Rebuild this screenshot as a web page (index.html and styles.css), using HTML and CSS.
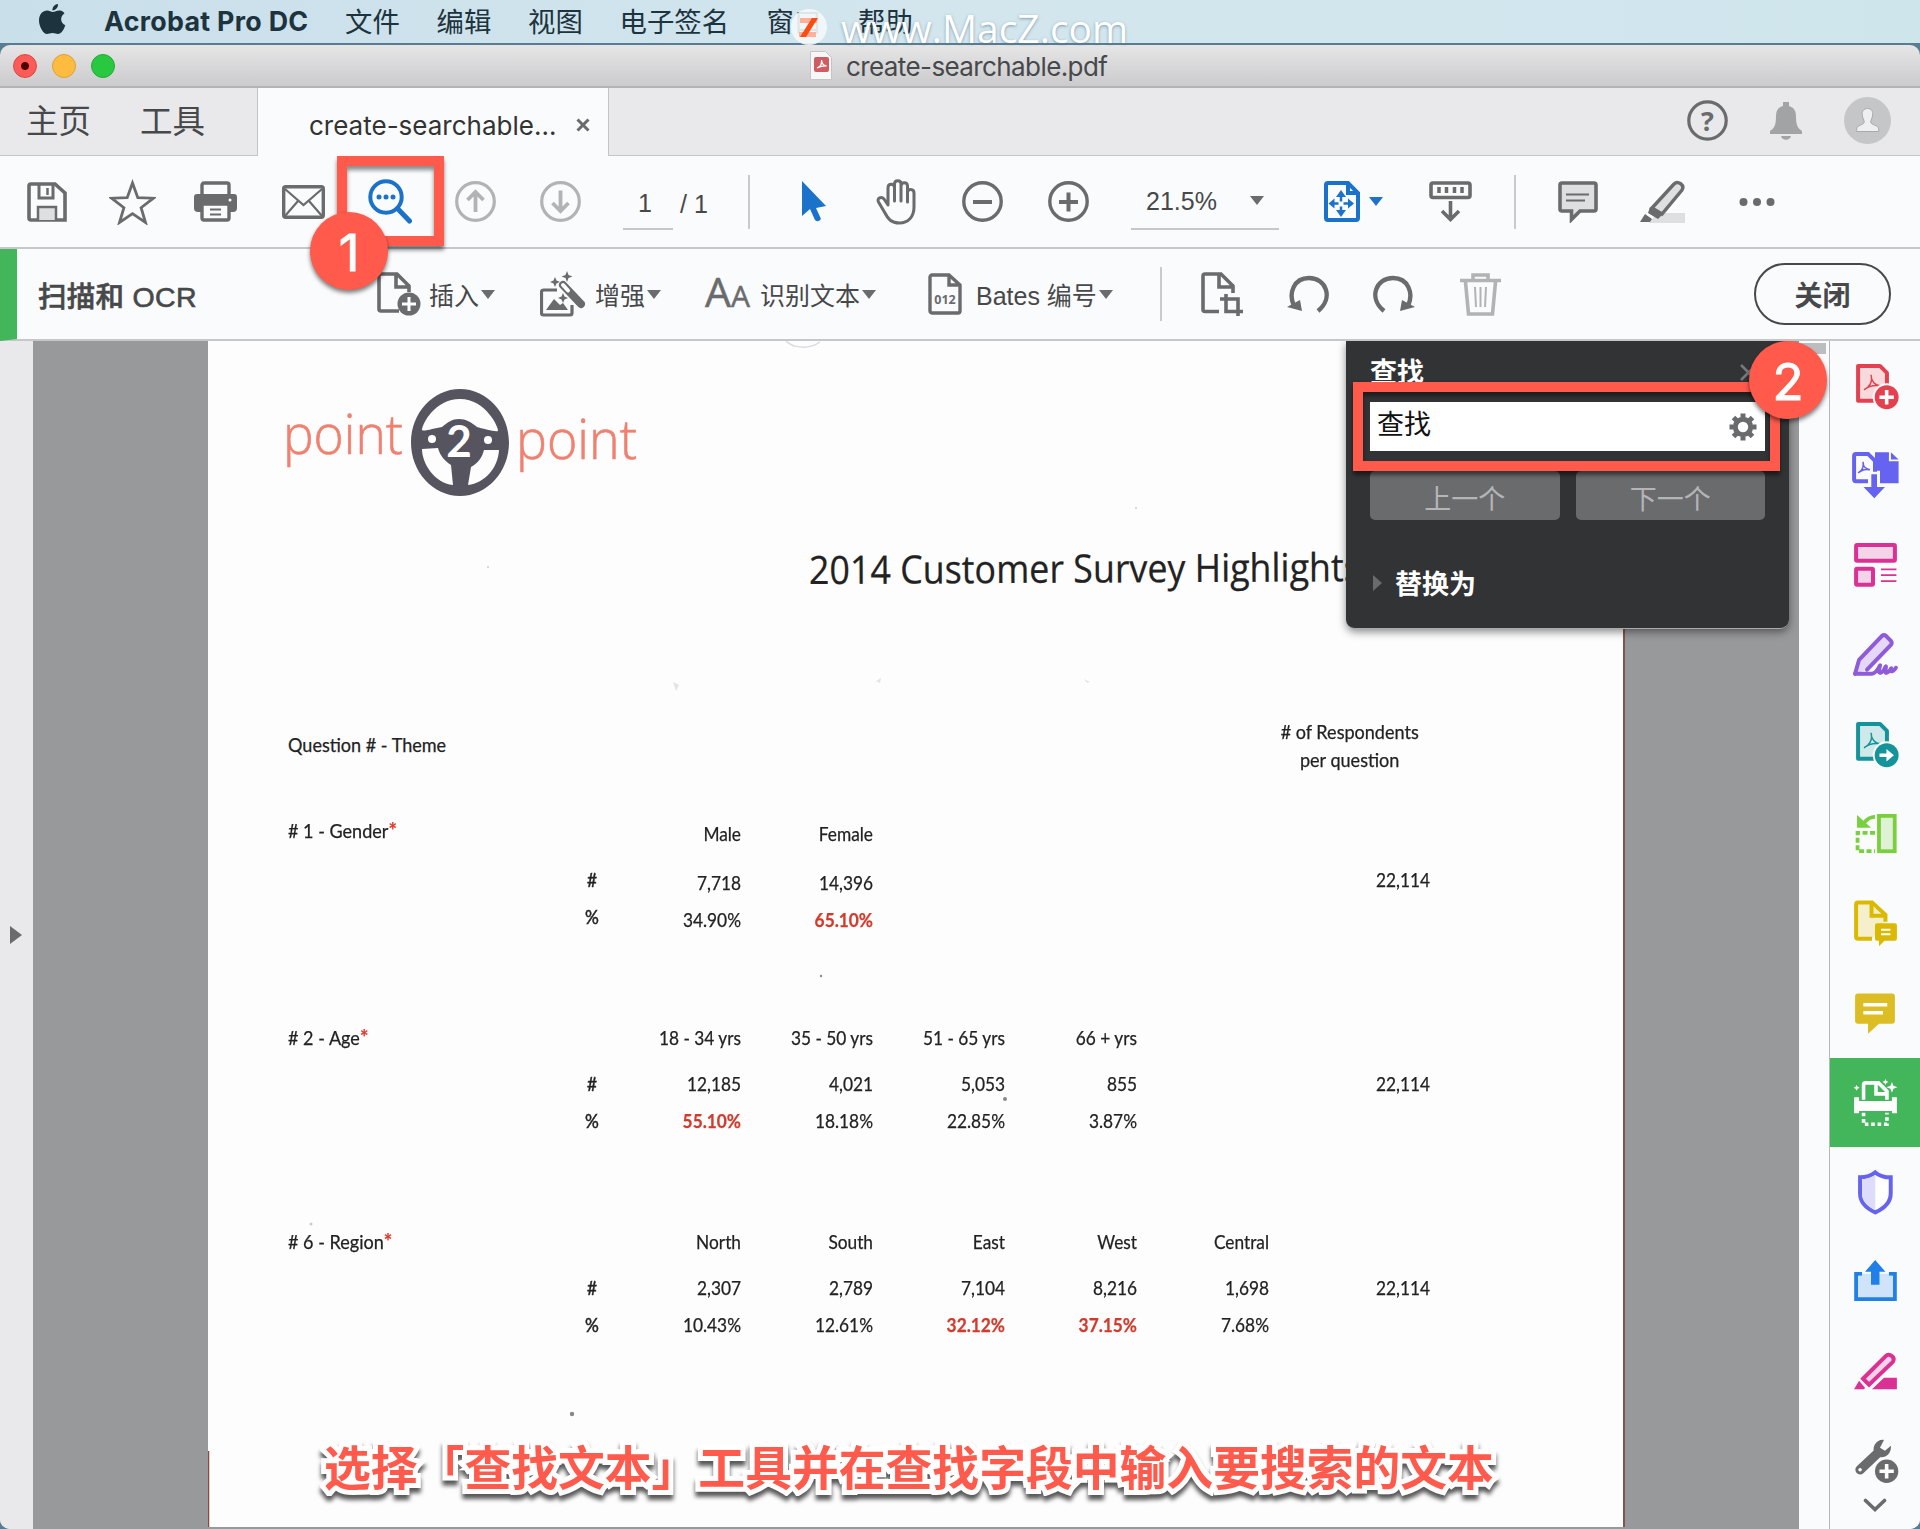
FILE: index.html
```html
<!DOCTYPE html>
<html lang="zh-CN">
<head>
    <meta charset="UTF-8">
    <title>create-searchable.pdf</title>
    <link rel="stylesheet" href="styles.css">
</head>
<body>

<!-- macOS menu bar -->
<nav class="menubar">
    <svg width="65" height="32" viewBox="0 0 65 32"><path fill="#1d333d" d="M14 8c2 0 4-2 7-1.500 2 .3 3.500 1.300 4.500 2.700-5 3.500-4 10 .8 12C25 25.500 22 30 19 30c-2 0-3-1-5.500-1S10 30 8 30C4 30 0 22 0 16.500 0 10 4 6.500 8 6.500c2.500 0 4 1.500 6 1.500zM13.500 6.500C13 3 16 0 19 0c.4 3.500-2.500 6.500-5.500 6.500z"/></svg>
    <b>Acrobat Pro DC</b>
    <span>文件</span>
    <span>编辑</span>
    <span>视图</span>
    <span class="wide">电子签名</span>
    <span>窗口</span>
    <span>帮助</span>
    <div class="watermark">
        <svg width="36" height="36" viewBox="0 0 36 36"><circle cx="18" cy="18" r="18" fill="#f4f8fa" opacity=".9"/><path fill="#ffb09a" d="M9 9h17v5H9zM8 23h17v5H8z"/><path fill="#fb4b14" d="M21 9h6L15 28H9z"/></svg>
        www.MacZ.com
    </div>
</nav>

<div class="titlebar">
    <i class="light red"></i><i class="light yellow"></i><i class="light green"></i>
    <svg class="file" width="22" height="29" viewBox="0 0 22 29"><path d="M.5.500h15l6 6v22H.5z" fill="#f7f7f7" stroke="#c4c4c6"/><rect x="4" y="6" width="15" height="15" rx="2" fill="#cf5c61"/><path d="M7 17c4-1.500 5-5 4.500-8 .3 4 2 5.500 5 6-4-.3-6 .4-9.500 2z" fill="none" stroke="#fff" stroke-width="1.300"/></svg>
    <span>create-searchable.pdf</span>
</div>

<div class="tabs">
    <div class="home"><span>主页</span><span>工具</span></div>
    <div class="tab"><span>create-searchable…</span>
        <svg width="14" height="14" viewBox="0 0 14 14"><path d="M1.500 1.500l11 11M12.500 1.500l-11 11" stroke="#6a6b6d" stroke-width="3"/></svg>
    </div>
    <div class="account">
        <svg width="41" height="41" viewBox="0 0 41 41"><circle cx="20.500" cy="20.500" r="18.700" fill="none" stroke="#6a6b6d" stroke-width="3.200"/><text x="20.500" y="30.500" text-anchor="middle" class="qmark">?</text></svg>
        <svg width="32" height="38" viewBox="0 0 32 38" fill="#a2a3a5"><path d="M13 0h6v4c5 1.500 7 5 7 10 0 9 1.500 12 6 15v3H0v-3c4.500-3 6-6 6-15 0-5 2-8.500 7-10zM11 34h10c-1 5-9 5-10 0z"/></svg>
        <svg width="47" height="47" viewBox="0 0 47 47"><circle cx="23.500" cy="23.500" r="23.500" fill="#c5c6c7"/><path fill="#eeeff0" stroke="#a9aaac" d="M23.500 11.500c4 0 5.500 3 5.200 6.500-.3 3-2 5-2 7 0 3 8 3 8 7v2.500h-22V32c0-4 7.500-4 7.500-7 0-2-1.700-4-2-7-.3-3.500 1.300-6.500 5.300-6.500z"/></svg>
    </div>
</div>

<div class="toolbar">
    <svg width="40" height="40" viewBox="0 0 40 40" fill="none" stroke="#6a6b6d" stroke-width="3.600"><path d="M4 2h24l10 9v27H4a2 2 0 0 1-2-2V4a2 2 0 0 1 2-2z"/><path d="M12 2v14h14V2" stroke-width="3"/><path d="M20.500 6v7" stroke-width="2.500"/><path d="M11 38V25h18v13" fill="#dedfe1" stroke-width="2.500"/></svg>
    <svg width="47" height="46" viewBox="0 0 47 46"><path d="M23.500 4l5.300 14.700 15.700.5-12.400 9.500 4.400 14.800-13-8.800-13 8.800 4.400-14.800L2.500 19.200l15.700-.5z" fill="none" stroke="#6a6b6d" stroke-width="2.800"/></svg>
    <svg width="43" height="41" viewBox="0 0 43 41"><path d="M3 13h37a3 3 0 0 1 3 3v11a4 4 0 0 1-4 4H4a4 4 0 0 1-4-4V16a3 3 0 0 1 3-3z" fill="#6a6b6d"/><path d="M8 13V4a2 2 0 0 1 2-2h23a2 2 0 0 1 2 2v9" fill="none" stroke="#6a6b6d" stroke-width="3.400"/><path d="M8 23h27v14a2 2 0 0 1-2 2H10a2 2 0 0 1-2-2z" fill="#fafbfc" stroke="#6a6b6d" stroke-width="3.400"/><path d="M16 28.500h11M16 33.500h11" stroke="#6a6b6d" stroke-width="2"/><circle cx="36" cy="19" r="1.500" fill="#fff"/></svg>
    <svg width="43" height="34" viewBox="0 0 43 34" fill="none" stroke="#6a6b6d"><rect x="1.700" y="1.700" width="39.600" height="30.600" rx="2" stroke-width="3.400"/><path d="M3 4l18.500 16L40 4M3 31l13-15M40 31L27 16" stroke-width="2.200"/></svg>
    <svg width="44" height="45" viewBox="0 0 44 45"><circle cx="18" cy="18" r="15.700" fill="none" stroke="#1b72ca" stroke-width="4"/><path d="M29.500 29.500L41.500 42" stroke="#1b72ca" stroke-width="5" stroke-linecap="round"/><g fill="#1b72ca"><circle cx="11" cy="18" r="2.500"/><circle cx="18" cy="18" r="2.500"/><circle cx="25" cy="18" r="2.500"/></g></svg>
    <svg width="41" height="41" viewBox="0 0 41 41" fill="none" stroke="#b2b3b5" stroke-width="3.200"><circle cx="20.500" cy="20.500" r="18.800"/><path d="M20.500 31V11M12.500 19l8-8 8 8" stroke-width="3.800"/></svg>
    <svg width="41" height="41" viewBox="0 0 41 41" fill="none" stroke="#b2b3b5" stroke-width="3.200"><circle cx="20.500" cy="20.500" r="18.800"/><path d="M20.500 9.500v20M12.500 22l8 8 8-8" stroke-width="3.800"/></svg>
    <div class="field page-no">1</div>
    <span class="page-total">/ 1</span>
    <i class="sep"></i>
    <svg width="26" height="41" viewBox="0 0 26 41"><path d="M1 0l24 25-10 2 5 11q-3 4-6 1l-5-11-8 7z" fill="#1b72ca"/></svg>
    <svg width="44" height="46" viewBox="0 0 44 46" fill="none" stroke="#6a6b6d" stroke-width="3" stroke-linecap="round" stroke-linejoin="round"><path d="M12 26V9c0-5 6.500-5 6.500 0v13V5c0-4.500 6.500-4.500 6.500 0v17V7c0-4.500 6.500-4.500 6.500 0v16V14c0-5 6.500-4.500 6.500 0v14c0 10-6 16-14.500 16C15 44 12 40 9 34L2.500 23c-2-4 3-6 5.500-3z"/></svg>
    <svg width="41" height="41" viewBox="0 0 41 41" fill="none" stroke="#6a6b6d" stroke-width="3.400"><circle cx="20.500" cy="20.500" r="18.700"/><path d="M11 21h19" stroke-width="4"/></svg>
    <svg width="41" height="41" viewBox="0 0 41 41" fill="none" stroke="#6a6b6d" stroke-width="3.400"><circle cx="20.500" cy="20.500" r="18.700"/><path d="M11 21h19M20.500 11.500v19" stroke-width="4"/></svg>
    <div class="field zoom">21.5%<i class="caret"></i></div>
    <svg width="36" height="41" viewBox="0 0 36 41"><path d="M4 2h20l10 10v25a2 2 0 0 1-2 2H4a2 2 0 0 1-2-2V4a2 2 0 0 1 2-2zM24 2v10h10" fill="none" stroke="#1b72ca" stroke-width="4"/><path d="M17 15v16M9 22.500h16" stroke="#1b72ca" stroke-width="2.500" stroke-dasharray="5.500 5"/><path d="M17 9l5 7H12zM17 36l5-7H12zM4.500 22.500l6-5v10zM30 22.500l-6-5v10z" fill="#1b72ca"/></svg>
    <i class="caret blue"></i>
    <svg width="43" height="41" viewBox="0 0 43 41" fill="none" stroke="#6a6b6d"><rect x="2" y="2" width="39" height="14.500" rx="2" stroke-width="3.600"/><path d="M10 6v6M17.500 6v6M25.500 6v6M33 6v6" stroke-width="3.500"/><path d="M21.500 20v18M13 30l8.500 8.500L30 30" stroke-width="3.600"/></svg>
    <i class="sep"></i>
    <svg width="40" height="42" viewBox="0 0 40 42"><path d="M4 2h32a2 2 0 0 1 2 2v24a2 2 0 0 1-2 2H22l-8.500 8.500V30H4a2 2 0 0 1-2-2V4a2 2 0 0 1 2-2z" fill="#dedfe1" stroke="#6a6b6d" stroke-width="3.600"/><path d="M8 13.500h23M8 19.500h19" stroke="#6a6b6d" stroke-width="2"/></svg>
    <svg width="45" height="44" viewBox="0 0 45 44"><path d="M17 33h28v10H9z" fill="#dedfe1"/><path d="M12 28L34 4c4-4 11 1 8 6L22 34z" fill="#dedfe1" stroke="#6a6b6d" stroke-width="3.400"/><path d="M10 27l12 8-4 4-10-6zM5 34l7 5-2 3H0z" fill="#6a6b6d"/></svg>
    <svg width="36" height="10" viewBox="0 0 36 10" fill="#6a6b6d"><circle cx="4.500" cy="5" r="4"/><circle cx="18" cy="5" r="4"/><circle cx="31.500" cy="5" r="4"/></svg>
</div>

<div class="ocrbar">
    <b>扫描和 OCR</b>
    <svg width="44" height="44" viewBox="0 0 44 44"><path d="M22 39H4a2 2 0 0 1-2-2V4a2 2 0 0 1 2-2h16l12 12v6M19 2v13h13" fill="none" stroke="#6a6b6d" stroke-width="3.600"/><circle cx="32" cy="32" r="11.500" fill="#6a6b6d"/><path d="M25 32h14M32 25v14" stroke="#fff" stroke-width="3"/></svg>
    <span>插入<i class="caret"></i></span>
    <svg width="45" height="46" viewBox="0 0 45 46"><path d="M17 19H3.500a2 2 0 0 0-2 2v21a2 2 0 0 0 2 2H30a2 2 0 0 0 2-2V34" fill="none" stroke="#6a6b6d" stroke-width="3.200"/><path d="M6 39l8-11 6 6 3-2 5 7z" fill="#6a6b6d"/><path d="M23 14L41 33" stroke="#6a6b6d" stroke-width="8" stroke-linecap="round"/><path d="M23 14l5 5.500" stroke="#fff" stroke-width="4" stroke-linecap="round"/><path d="M27 0l1.500 4 4 1.500-4 1.500L27 11l-1.500-4-4-1.500 4-1.500zM15 6l1.500 3.500L20 11l-3.500 1.500L15 16l-1.500-3.500L10 11l3.500-1.500zM23 22l1.500 3.500L28 27l-3.500 1.500L23 32l-1.500-3.500L18 27l3.500-1.500z" fill="#6a6b6d"/></svg>
    <span>增强<i class="caret"></i></span>
    <span class="aa">A<small>A</small></span>
    <span>识别文本<i class="caret"></i></span>
    <svg width="34" height="42" viewBox="0 0 34 42"><path d="M4 2h17l11 10v26a2 2 0 0 1-2 2H4a2 2 0 0 1-2-2V4a2 2 0 0 1 2-2zM21 2v10h11" fill="none" stroke="#6a6b6d" stroke-width="3.400"/><text x="17" y="31" text-anchor="middle" class="num">012</text></svg>
    <span>Bates 编号<i class="caret"></i></span>
    <i class="sep"></i>
    <svg width="42" height="44" viewBox="0 0 42 44" fill="none" stroke="#6a6b6d" stroke-width="3.600"><path d="M18 39.500H4a2 2 0 0 1-2-2V4a2 2 0 0 1 2-2h16l12 12v7M18 2v13h14"/><path d="M25 22v17.500h17M19 27h18v17"/></svg>
    <svg width="42" height="38" viewBox="0 0 42 38"><path d="M7 31C1 18 7 3 22 3c17 0 25 20 9 33" fill="none" stroke="#6a6b6d" stroke-width="4.400"/><path d="M0 32l13-7 2 11z" fill="#6a6b6d"/></svg>
    <svg width="42" height="38" viewBox="0 0 42 38"><path d="M35 31C41 18 35 3 20 3 3 3-5 23 11 36" fill="none" stroke="#6a6b6d" stroke-width="4.400"/><path d="M42 32l-13-7-2 11z" fill="#6a6b6d"/></svg>
    <svg width="41" height="43" viewBox="0 0 41 43" fill="none" stroke="#b2b3b5" stroke-width="3.600"><path d="M0 7.500h41M13 7V2h15v5M5.500 9l3 32h24l3-32"/><path d="M15 14l1 20M20.500 14v20M26 14l-1 20" stroke-width="2"/></svg>
    <button class="close">关闭</button>
</div>

<main class="workspace">
    <div class="nav-strip"><i></i></div>

    <div class="canvas">
        <article class="sheet">
            <!-- letterhead: tilted a touch like the scan -->
            <svg class="logo" width="360" height="120" viewBox="0 0 360 120">
                <g class="point">
                    <text x="-2" y="70" textLength="120" lengthAdjust="spacingAndGlyphs">point</text>
                    <text x="231" y="75" textLength="121" lengthAdjust="spacingAndGlyphs">point</text>
                </g>
                <path fill="#56545f" fill-rule="evenodd" d="M175 5c27 0 49 24 49 53.500S202 112 175 112s-49-24-49-53.500S148 5 175 5zM137 46c2 2 12-2 20-3 6-5 10-8 17-8s12 3 18 8c8 2 17 5 21 4 1-3-12-32-38-32-25 0-38 25-38 31zM137 65c0 14 12 34 31 36l-2-20c-6-4-11-9-13-17zM214 66l-15 0c-2 8-6 13-13 17l-3 18c17-2 30-17 31-35z"/>
                <circle cx="147" cy="55" r="4" fill="#fff"/><circle cx="203" cy="56" r="4" fill="#fff"/>
                <text x="174" y="73" text-anchor="middle" class="two">2</text>
            </svg>
            <h1>2014 Customer Survey Highlights</h1>

            <div class="head-row">
                <span>Question # - Theme</span>
                <span class="resp"># of Respondents<br>per question</span>
            </div>

            <section class="question first">
                <span class="label"># 1 - Gender<em>*</em></span><span></span><span>Male</span><span>Female</span>
                <span class="mark">#</span><span>7,718</span><span>14,396</span><span class="total">22,114</span>
                <span class="mark">%</span><span>34.90%</span><span class="hot">65.10%</span>
            </section>
            <section class="question">
                <span class="label"># 2 - Age<em>*</em></span><span></span><span>18 - 34 yrs</span><span>35 - 50 yrs</span><span>51 - 65 yrs</span><span>66 + yrs</span>
                <span class="mark">#</span><span>12,185</span><span>4,021</span><span>5,053</span><span>855</span><span class="total">22,114</span>
                <span class="mark">%</span><span class="hot">55.10%</span><span>18.18%</span><span>22.85%</span><span>3.87%</span>
            </section>
            <section class="question">
                <span class="label"># 6 - Region<em>*</em></span><span></span><span>North</span><span>South</span><span>East</span><span>West</span><span>Central</span>
                <span class="mark">#</span><span>2,307</span><span>2,789</span><span>7,104</span><span>8,216</span><span>1,698</span><span class="total">22,114</span>
                <span class="mark">%</span><span>10.43%</span><span>12.61%</span><span class="hot">32.12%</span><span class="hot">37.15%</span><span>7.68%</span>
            </section>

            <!-- dust and scanner marks -->
            <svg class="dust" width="1416" height="1186" viewBox="0 0 1416 1186" fill="#c9ccd4">
                <path d="M578 0c8 8 24 8 34 1" fill="none" stroke="#d9dadd" stroke-width="1.500"/>
                <circle cx="928" cy="167" r="1"/><circle cx="280" cy="226" r="1"/><circle cx="797" cy="758" r="2" fill="#888"/><circle cx="613" cy="635" r="1.200" fill="#888"/><circle cx="364" cy="1073" r="2.200" fill="#888"/><circle cx="103" cy="883" r="1.500"/>
                <path d="M465 341l6 3-3 6zM620 342l4 3zM668 340l5-3-1 5zM738 336l2 4zM876 338l6 3-3 1zM1050 338l3-4zM1117 340l5 2z" opacity=".5"/>
                <path d="M0.500 1110v76" stroke="#8d4a3c" stroke-width="1.500"/>
            </svg>
        </article>
    </div>

    <div class="scroll"><i></i></div>

    <aside class="tools">
        <svg viewBox="0 0 90 90"><path d="M28 25h22l7 7v28H28z" fill="#f8dadd" stroke="#e3414f" stroke-width="4" stroke-linejoin="round"/><path d="M34 49c5-2 9-8 7-15 0 6 4 11 9 11-6-1-11 0-16 4z" fill="none" stroke="#e3414f" stroke-width="1.500"/><circle cx="56.700" cy="56.500" r="14" fill="#fafbfc"/><circle cx="56.700" cy="56.500" r="12" fill="#e3414f"/><path d="M49.500 56.500h14.400M56.700 49.300v14.400" stroke="#fff" stroke-width="3.600"/></svg>
        <svg viewBox="0 0 90 90"><path d="M38 50.500H26a2 2 0 0 1-2-2V25a2 2 0 0 1 2-2h12l7 7v11" fill="none" stroke="#6563ef" stroke-width="4"/><path d="M45 21.400h14v9h9.700v22H50V40h-5zM61 21.400l7.700 7.200H61z" fill="#6563ef"/><path d="M28 42c4-2 6-5 5-11 0 5 2 7 7 8-5-1-7 0-12 3z" fill="none" stroke="#6563ef" stroke-width="1.500"/><path d="M41.300 43.400H47v12.800h8L44.300 67.500 33.500 56.200h7.800z" fill="#6563ef"/></svg>
        <svg viewBox="0 0 90 90" stroke="#db3094"><g fill="#f4d4e8" stroke-width="4"><rect x="26" y="25" width="39" height="16" rx="1"/><rect x="26" y="49" width="17" height="16" rx="1"/></g><path d="M51 49.500h15.500M51 55.300h15.500M51 61.300h15.500" stroke-width="1.800"/></svg>
        <svg viewBox="0 0 90 90" fill="none" stroke="#8f5bd9" stroke-width="4" stroke-linejoin="round" stroke-linecap="round"><path d="M25 64l4-14 23-24q2-1.500 4 0l5 5q1.500 2 0 4L37 60" fill="#e4d8f6"/><path d="M25 64h17c5 0 9-11 8-8s-2 8 1 7 5-8 5-6-2 7 1 6 5-6 4-4 1 5 5-1"/></svg>
        <svg viewBox="0 0 90 90"><path d="M28 25h22l7 7v28H28z" fill="#cfe9ea" stroke="#15939a" stroke-width="4" stroke-linejoin="round"/><path d="M34 49c5-2 9-8 7-15 0 6 4 11 9 11-6-1-11 0-16 4z" fill="none" stroke="#15939a" stroke-width="1.500"/><circle cx="56.700" cy="56.500" r="14" fill="#fafbfc"/><circle cx="56.700" cy="56.500" r="12" fill="#15939a"/><path d="M49.500 54.700h7v-4.500l7.500 6.300-7.500 6.300v-4.500h-7z" fill="#fff"/></svg>
        <svg viewBox="0 0 90 90" fill="none" stroke="#79cf3c" stroke-width="3.800"><rect x="49" y="27" width="15.800" height="35.500" fill="#e0f2d6"/><path d="M45 44H27.500v18.500H45" stroke-dasharray="5 2.500"/><path d="M45 28c-5 0-8 2-11 6"/><path d="M27 26v13h14z" fill="#79cf3c" stroke="none"/></svg>
        <svg viewBox="0 0 90 90"><path d="M42 60H28a2 2 0 0 1-2-2V25.500a2 2 0 0 1 2-2h14L55.500 36v7" fill="#f6efcc" stroke="#dbb900" stroke-width="4"/><path d="M41.500 24v13h14" fill="none" stroke="#dbb900" stroke-width="4"/><path d="M47 44.500h18q2 0 2 2v13.500q0 2-2 2H54.500L49 67.500V62h-2q-2 0-2-2V46.500q0-2 2-2z" fill="#dbb900"/><path d="M51 51h9.500M51 55.500h9.500" stroke="#fff" stroke-width="2"/></svg>
        <svg viewBox="0 0 90 90"><path d="M28 25.500h34q3 0 3 3v24.500q0 3-3 3H49L38 66V56H28q-3 0-3-3V28.500q0-3 3-3z" fill="#dcbd24"/><path d="M33.300 37h24M33.300 45H53" stroke="#fff" stroke-width="3.600"/></svg>
        <svg viewBox="0 0 90 90" class="active" fill="none" stroke="#fff" stroke-width="3.600"><path d="M33.500 42V27a2 2 0 0 1 2-2h13l8.500 8.500V42M46 25v11h11"/><path d="M24 39.500h5v3.700h33v-3.700h5v16h-5v-2.300H29v2.300h-5z" fill="#fff" stroke="none"/><path d="M33.500 55v11.500H57V55" stroke-dasharray="3.600 2.800"/><path d="M62 24l1.500 4 4 1.500-4 1.500-1.500 4-1.500-4-4-1.500 4-1.500zM55.500 21l1 2 2 1-2 1-1 2-1-2-2-1 2-1zM26.500 27l1 2 2 1-2 1-1 2-1-2-2-1 2-1z" fill="#fff" stroke="none"/></svg>
        <svg viewBox="0 0 90 90"><path d="M45.300 25.500c4 3.500 9 5 15.500 5v16c0 9-6 15-15.500 19.200C36 61.500 30 55.500 30 46.500v-16c6 0 11-1.500 15.300-5z" fill="#fff" stroke="#6563ef" stroke-width="4"/><path d="M45.300 28v35.500C36 59 32 54 32 46.500V32.300c6 0 10-1.800 13.300-4.300z" fill="#dddcfa"/></svg>
        <svg viewBox="0 0 90 90"><path d="M32 37h-6v25.500h39V37h-6" fill="#cfe3fa" stroke="#2080e8" stroke-width="3.800"/><path d="M29 39h10v11h12.500V39H62v20H29z" fill="#cfe3fa"/><path d="M45.200 23L55.500 35h-6v13h-8.500V35h-6z" fill="#2080e8"/></svg>
        <svg viewBox="0 0 90 90"><path d="M54 51h13v11.500H42z" fill="#db3094"/><path d="M33 52l23-23c3-3 10 1 7 6L39 58z" fill="#f4d4e8" stroke="#db3094" stroke-width="4"/><path d="M29 54l6 7-1 1.500H24z" fill="#db3094"/></svg>
        <svg viewBox="0 0 90 90"><path d="M30 54l18-17" stroke="#6a6b6d" stroke-width="9.500" stroke-linecap="round"/><path d="M54 24c-8-1-13 8-9 14 5 7 17 3 16-8l-6 5-5-3z" fill="#6a6b6d"/><circle cx="30" cy="54" r="1.800" fill="#fff"/><circle cx="56.700" cy="55.500" r="14" fill="#fafbfc"/><circle cx="56.700" cy="55.500" r="11.700" fill="#6a6b6d"/><path d="M49.500 55.500h14.400M56.700 48.300v14.400" stroke="#fff" stroke-width="3.600"/></svg>
        <svg class="more" viewBox="0 0 24 14"><path d="M2.500 2.500L12 11.500l9.500-9" fill="none" stroke="#6a6b6d" stroke-width="3.600" stroke-linecap="round"/></svg>
    </aside>

    <!-- find panel floats over the page -->
    <div class="find">
        <div class="find-title">查找<svg width="17" height="17" viewBox="0 0 17 17"><path d="M1 1l15 15M16 1L1 16" stroke="#77787a" stroke-width="2.500"/></svg></div>
        <div class="find-input"><span>查找</span>
            <svg width="28" height="28" viewBox="-14 -14 28 28"><circle r="7.700" fill="none" stroke="#6a6b6d" stroke-width="5"/><g stroke="#6a6b6d" stroke-width="5"><path d="M0-13.500v4M0 9.500v4M-13.500 0h4M9.500 0h4M-9.500-9.500l3 3M6.500 6.500l3 3M-9.500 9.500l3-3M6.500-6.500l3-3"/></g></svg>
        </div>
        <div class="find-buttons"><button>上一个</button><button>下一个</button></div>
        <div class="replace"><i></i>替换为</div>
    </div>

    <p class="caption">选择「查找文本」工具并在查找字段中输入要搜索的文本</p>
</main>

<!-- step markers -->
<div class="frame frame-1"></div>
<div class="frame frame-2"></div>
<div class="step step-1">1</div>
<div class="step step-2">2</div>

</body>
</html>
```
FILE: styles.css
```css
* {
    box-sizing: border-box;
}
body {
    margin: 0;
    width: 1920px;
    height: 1529px;
    overflow: hidden;
    position: relative;
    display: flex;
    flex-direction: column;
    background: #587d92;
    color: #47484a;
    font-family: "Liberation Sans", "Noto Sans CJK SC", sans-serif;
}
svg {
    display: block;
    flex: none;
}
button {
    font-family: inherit;
    padding: 0;
}

/* Menu bar */
.menubar {
    height: 43px;
    background: linear-gradient(90deg, #c9dfea, #d3e6ee 50%, #cfe5ec);
    display: flex;
    align-items: center;
    padding: 0 0 3px 39px;
    font-size: 27.400px;
    color: #1d333d;
    position: relative;
    white-space: nowrap;
}
.menubar b {
    width: 241px;
    font-family: Inter, "Liberation Sans", sans-serif;
    font-size: 26.800px;
    font-weight: 700;
    letter-spacing: 0.300px;
    padding-top: 1px;
}
.menubar span {
    width: 91.500px;
}
.menubar .wide {
    width: 147px;
}
.watermark {
    position: absolute;
    left: 791px;
    top: 0;
    height: 54px;
    display: flex;
    align-items: center;
    gap: 14px;
    font: 500 39px "Open Sans", sans-serif;
    color: #fff;
    text-shadow: 0 1px 3px rgba(90, 120, 135, 0.7);
    z-index: 3;
}

/* Window chrome */
.titlebar {
    height: 43px;
    margin-top: 2px;
    border-radius: 10px 10px 0 0;
    border-bottom: 2px solid #b3b3b5;
    background: linear-gradient(#e6e6e7, #cbcbcd);
    display: flex;
    align-items: center;
    padding-left: 13px;
    font: 26px Inter, sans-serif;
    letter-spacing: -0.600px;
}
.titlebar span {
    padding-top: 2px;
}
.light {
    width: 24px;
    height: 24px;
    border-radius: 50%;
    margin-right: 15px;
    margin-top: 1px;
}
.red {
    background: radial-gradient(#4d0000 0 3.500px, #fc5b57 4.500px);
    border: 1px solid #e0443e;
}
.yellow {
    background: #fdbc40;
    border: 1px solid #e0a030;
}
.green {
    background: #28c840;
    border: 1px solid #22ab35;
}
.file {
    margin: 0 14px 0 680px;
}
.tabs {
    height: 68px;
    background: #e9e9eb;
    display: flex;
    align-items: stretch;
}
.home {
    width: 258px;
    border-right: 1px solid #c4c5c7;
    border-bottom: 1px solid #c4c5c7;
    padding: 0 0 6px 26px;
    display: flex;
    align-items: center;
    gap: 49px;
    font-size: 32.500px;
}
.tab {
    width: 350px;
    background: #fafbfc;
    display: flex;
    align-items: center;
    justify-content: space-between;
    padding: 6px 18px 0 51px;
    font: 26px Inter, sans-serif;
    letter-spacing: 0;
    color: #333;
}
.account {
    flex: 1;
    border-bottom: 1px solid #c4c5c7;
    border-left: 1px solid #c4c5c7;
    display: flex;
    justify-content: flex-end;
    align-items: center;
    gap: 42px;
    padding: 0 29px 2px 0;
}
.qmark {
    font: bold 27px "Open Sans", sans-serif;
    fill: #6a6b6d;
}

/* Main toolbar, one column per tool */
.toolbar {
    height: 93px;
    background: #fafbfc;
    border-bottom: 2px solid #c6c7c9;
    display: grid;
    grid-template-columns: 82px 85px 88px 86px 87px 85px 83px 57px 68px 53px 75px 86px 86px 83px 193px 45px 60px 85px 44px 82px 99px 60px;
    align-items: center;
    justify-items: start;
    padding-left: 27px;
    font: 25px "Liberation Sans", sans-serif;
}
.sep {
    width: 2px;
    height: 54px;
    background: #c9cacc;
}
.field {
    height: 56px;
    line-height: 58px;
    border-bottom: 2px solid #c6c7c9;
}
.page-no {
    width: 50px;
    text-align: center;
    padding-right: 6px;
}
.page-total {
    padding-top: 6px;
}
.zoom {
    width: 148px;
    padding-left: 15px;
    display: flex;
    align-items: center;
    justify-content: space-between;
    padding-right: 15px;
}
.caret {
    display: inline-block;
    border: 7px solid transparent;
    border-top: 9px solid #6a6b6d;
    border-bottom: 0;
}
.caret.blue {
    border-top-color: #1b72ca;
}

/* Scan & OCR bar */
.ocrbar {
    height: 92px;
    background: #fafbfc;
    border-left: 17px solid #43b55a;
    border-bottom: 2px solid #c6c7c9;
    display: grid;
    grid-template-columns: 339px 52px 111px 55px 110px 55px 168px 48px 184px 41px 86px 86px 87px 294px 137px;
    align-items: center;
    padding-left: 21px;
    font-size: 25px;
    white-space: nowrap;
}
.ocrbar b {
    font-size: 28.500px;
    font-family: "Liberation Sans", "Noto Sans CJK SC", sans-serif;
    font-weight: 500;
    letter-spacing: 0.300px;
    -webkit-text-stroke: 0.600px #47484a;
}
.ocrbar span {
    display: flex;
    align-items: center;
    gap: 2px;
}
.ocrbar .aa {
    font: 41px "Open Sans", sans-serif;
    align-items: baseline;
    gap: 0;
    color: #6a6b6d;
    margin-top: -7px;
    -webkit-text-stroke: 0.500px #6a6b6d;
}
.aa small {
    font-size: 30px;
}
.num {
    font: bold 12.5px "Open Sans", sans-serif;
    fill: #6a6b6d;
}
.close {
    width: 137px;
    height: 62px;
    border: 2px solid #47484a;
    border-radius: 31px;
    background: none;
    font-size: 28px;
    font-weight: 700;
    color: #47484a;
}

/* Work area */
.workspace {
    flex: 1;
    display: flex;
    position: relative;
    overflow: hidden;
    border-radius: 0 0 10px 10px;
    background: #fafbfc;
}
.nav-strip {
    width: 33px;
    background: #e9e9eb;
    display: flex;
    align-items: center;
    padding-left: 10px;
}
.nav-strip i {
    border: 9px solid transparent;
    border-left: 12px solid #6a6b6d;
    border-right: 0;
}
.canvas {
    width: 1766px;
    background: #98999b;
    padding-left: 175px;
}
.sheet {
    position: relative;
    width: 1417px;
    height: 1186px;
    background: #fdfdfe;
    border-right: 2px solid #7d564e;
    padding-left: 80px;
    font: 19px Lato, sans-serif;
    -webkit-text-stroke: 0.250px;
    color: #222;
}
.logo {
    margin-left: -3px;
    overflow: visible;
    transform: translateY(43px);
}
.point text {
    font: 300 56px "Open Sans", Lato, sans-serif;
    fill: #f0806f;
    stroke: #f0806f;
    stroke-width: 0.600px;
}
.two {
    font: bold 44px Lato, sans-serif;
    fill: #fff;
}
.sheet h1 {
    margin: 82px 0 0 521px;
    font: 39px/52px "Open Sans", sans-serif;
    white-space: nowrap;
    transform: rotate(-0.3deg) scaleX(0.918);
    transform-origin: left center;
    width: 600px;
}
.head-row {
    display: flex;
    justify-content: space-between;
    align-items: center;
    margin-top: 122px;
    padding-right: 201px;
    height: 58px;
}
.head-row span {
    transform: scaleX(0.95) translateY(-2px);
    transform-origin: left center;
}
.head-row .resp {
    text-align: center;
    line-height: 28px;
    transform: scaleX(0.95);
    transform-origin: center;
}
.question {
    display: grid;
    grid-template-columns: 288px 32px 133px 132px 132px 132px 132px 161px;
    grid-template-rows: 46px 37px 37px;
    height: 204px;
    text-align: right;
    line-height: 26px;
}
.question span {
    transform: scaleX(0.91);
    transform-origin: right center;
}
.question .label {
    text-align: left;
    transform: scaleX(0.95);
    transform-origin: left center;
}
.first {
    margin-top: 46px;
    grid-template-rows: 49px 37px 34px;
}
/* the left side of the scan sits a little higher in the first block */
.first .label,
.first .mark,
.first .total {
    position: relative;
    top: -3px;
}
.label em {
    color: #e2382c;
    font-style: normal;
    font-weight: bold;
    font-size: 21px;
    line-height: 20px;
}
.question .mark {
    grid-column: 2;
    text-align: center;
    transform-origin: center;
    -webkit-text-stroke: 0.500px;
}
.total {
    grid-column: 8;
}
.hot {
    color: #d23a2c;
    font-weight: bold;
}
.dust {
    position: absolute;
    left: 0;
    top: 0;
}
.scroll {
    width: 30px;
    background: #fafbfc;
    padding-top: 2px;
}
.scroll i {
    display: block;
    width: 27px;
    height: 11px;
    background: #bcbdbf;
}

/* Tool rail */
.tools {
    width: 91px;
    border-left: 1px solid #b6b7b9;
    background: #fafbfc;
    display: flex;
    flex-direction: column;
    align-items: center;
}
.tools svg {
    width: 90px;
    height: 89.600px;
}
.tools .active {
    background: #43b55a;
}
.tools .more {
    width: 24px;
    height: 14px;
    margin-top: -8px;
}

/* Find panel */
.find {
    position: absolute;
    left: 1346px;
    top: 0;
    width: 443px;
    height: 288px;
    padding: 11px 24px 0 24px;
    background: #323335;
    border-radius: 0 0 9px 9px;
    border-bottom: 1px solid #aaa;
    box-shadow: 0 3px 8px rgba(0, 0, 0, 0.45);
    color: #fff;
    font-size: 27px;
    line-height: 40px;
}
.find-title {
    display: flex;
    justify-content: space-between;
    align-items: center;
    height: 50px;
    padding: 0 8px 9px 0;
    font-weight: 700;
}
.find-input {
    display: flex;
    justify-content: space-between;
    align-items: center;
    height: 49px;
    padding: 0 8px 0 7px;
    background: #fff;
    color: #111;
}
.find-input span {
    padding-bottom: 3px;
}
.find-buttons {
    display: flex;
    gap: 16px;
    margin-top: 20px;
}
.find-buttons button {
    flex: 1;
    height: 49px;
    border: 0;
    border-radius: 5px;
    background: #6a6b6d;
    color: #b4b5b7;
    font-size: 27px;
    padding-top: 4px;
}
.replace {
    display: flex;
    align-items: center;
    gap: 13px;
    margin: 45px 0 0 3px;
    font-weight: 700;
}
.replace i {
    border: 8px solid transparent;
    border-left: 9px solid #6a6b6d;
    border-right: 0;
    margin-top: -5px;
}

/* Annotations */
.caption {
    position: absolute;
    left: 324px;
    top: 1093px;
    margin: 0;
    font-size: 46.800px;
    line-height: 70px;
    font-weight: 700;
    white-space: nowrap;
    color: #ff5a4c;
    -webkit-text-stroke: 10px #fff;
    paint-order: stroke fill;
    filter: drop-shadow(0 5px 2px rgba(0, 0, 0, 0.65));
}
.frame {
    position: absolute;
    border: 10px solid #ff5a4c;
    box-shadow: 0 4px 4px rgba(0, 0, 0, 0.5), inset 0 4px 4px rgba(0, 0, 0, 0.45);
}
.frame-1 {
    left: 337px;
    top: 156px;
    width: 107px;
    height: 90px;
}
.frame-2 {
    left: 1353px;
    top: 382px;
    width: 427px;
    height: 89px;
}
.step {
    position: absolute;
    width: 78px;
    height: 78px;
    border-radius: 50%;
    background: #ff5a4c;
    box-shadow: 0 3px 4px rgba(0, 0, 0, 0.5);
    color: #fff;
    font: 51px/82px Inter, sans-serif;
    -webkit-text-stroke: 1px #fff;
    text-align: center;
}
.step-1 {
    left: 310px;
    top: 212px;
}
.step-2 {
    left: 1749px;
    top: 341px;
}
```
